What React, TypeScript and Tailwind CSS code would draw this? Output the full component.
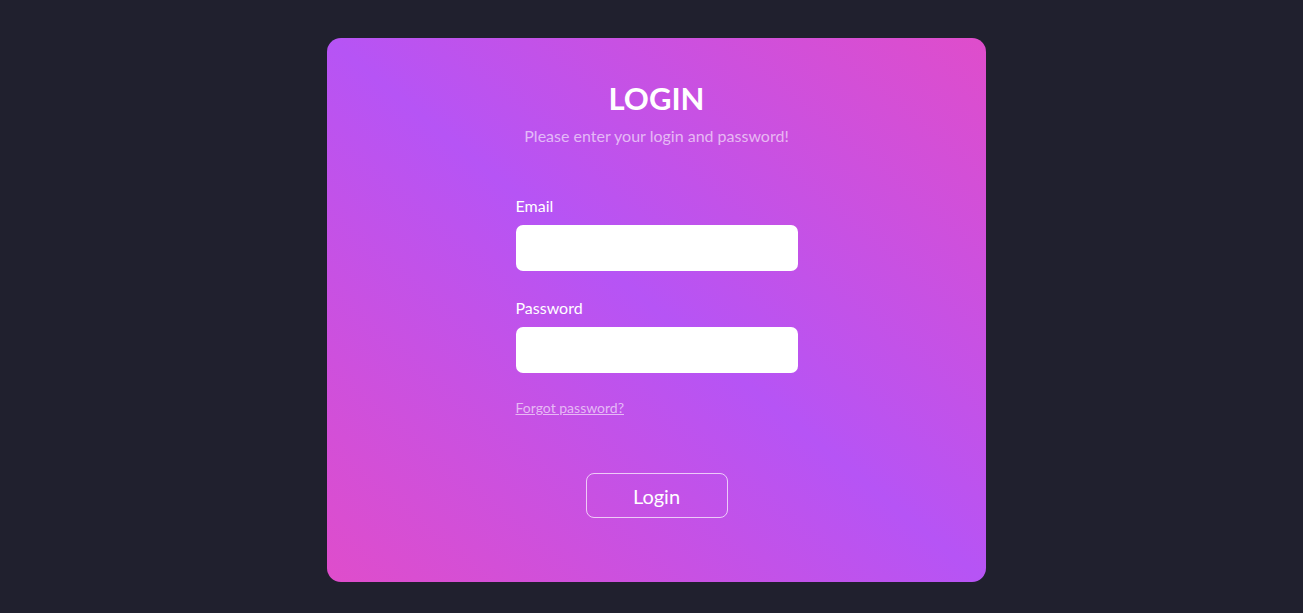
import { useState } from "react";

export default function App() {
  const [email, setEmail] = useState("");
  const [password, setPassword] = useState("");

  return (
    <div className="min-h-screen bg-[#20202e] flex justify-center pt-[38px] pl-[10px] font-['Lato',sans-serif]">
      <div className="w-[659px] h-[544px] rounded-[14px] bg-[linear-gradient(to_top_right,#df4dcb,#b654f5,#df4dcb)] flex flex-col items-center text-white">
        <h1 className="mt-[40px] text-[31px] leading-[40px] font-bold">LOGIN</h1>
        <p className="mt-[6px] text-[16px] leading-[24px] text-white/60">
          Please enter your login and password!
        </p>

        <form className="w-[282px] mt-[46px] flex flex-col" onSubmit={(e) => e.preventDefault()}>
          <label className="text-[16px] leading-[24px]">Email</label>
          <input
            type="email"
            value={email}
            onChange={(e) => setEmail(e.target.value)}
            className="mt-[7px] h-[46px] rounded-[7px] bg-white px-3 text-gray-800 outline-none"
          />

          <label className="mt-[25px] text-[16px] leading-[24px]">Password</label>
          <input
            type="password"
            value={password}
            onChange={(e) => setPassword(e.target.value)}
            className="mt-[7px] h-[46px] rounded-[7px] bg-white px-3 text-gray-800 outline-none"
          />

          <a href="#" className="mt-[25px] self-start text-[14px] leading-[20px] text-white/60 underline">
            Forgot password?
          </a>

          <button
            type="submit"
            className="mt-[55px] self-center w-[142px] h-[45px] rounded-[8px] border border-white/70 text-[20px] text-white"
          >
            Login
          </button>
        </form>
      </div>
    </div>
  );
}
